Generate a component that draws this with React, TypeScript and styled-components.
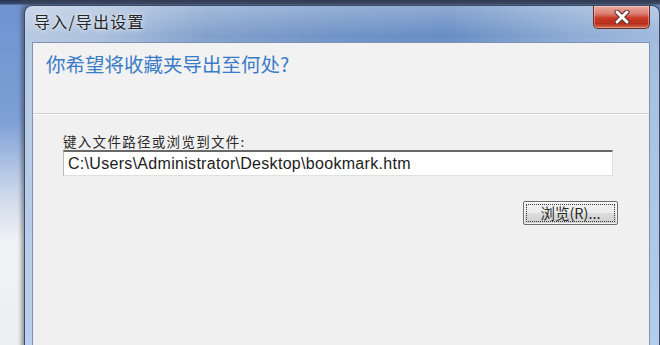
import React from 'react';
import styled, { createGlobalStyle } from 'styled-components';

const GlobalStyle = createGlobalStyle`
  html, body {
    margin: 0;
    padding: 0;
    width: 660px;
    height: 345px;
    overflow: hidden;
  }
  body {
    font-family: "Noto Sans CJK SC", "Liberation Sans", sans-serif;
  }
`;

const cjk = `"Noto Sans CJK SC", "Liberation Sans", sans-serif`;

const Desktop = styled.div`
  width: 660px;
  height: 345px;
  overflow: hidden;
  box-sizing: border-box;
  padding: 5px 0 0 24px;
  background:
    linear-gradient(to right, rgba(255, 255, 255, 0) 0, rgba(255, 255, 255, 0) 18px, rgba(90, 90, 90, 0.22) 24px),
    linear-gradient(
      to bottom,
      #263150 0,
      #3a4a6e 4px,
      #7093d0 5px,
      #7d9fd6 120px,
      #c8d5ea 190px,
      #f0f2f5 240px,
      #eceef0 345px
    );
`;

const Window = styled.div`
  width: 636px;
  height: 360px;
  box-sizing: border-box;
  border: 1px solid #3b4a68;
  border-bottom: none;
  border-radius: 8px 8px 0 0;
  padding: 0 9px 0 7px;
  display: flex;
  flex-direction: column;
  background:
    linear-gradient(to bottom, rgba(255, 255, 255, 0.3) 0, rgba(255, 255, 255, 0.05) 30px, rgba(255, 255, 255, 0.1) 40px, rgba(190, 215, 245, 0.7) 100%),
    linear-gradient(
      100deg,
      #b4c7e0 0,
      #a6bddb 80px,
      #7c9cca 180px,
      #6a8fc4 300px,
      #5f87c0 420px,
      #86a6d1 540px,
      #9db8dc 636px
    );
  box-shadow: -2px 0 4px rgba(0, 0, 0, 0.3);
`;

const TitleBar = styled.div`
  height: 36px;
  display: flex;
  justify-content: space-between;
  align-items: flex-start;
  flex: none;
`;

const Title = styled.div`
  margin: 5px 0 0 2px;
  font-family: ${cjk};
  font-size: 16px;
  line-height: 20px;
  letter-spacing: 1.2px;
  color: #262626;
  text-shadow: 0 0 6px rgba(255, 255, 255, 0.8), 0 0 2px rgba(255, 255, 255, 0.6);
`;

const CloseButton = styled.div`
  width: 57px;
  height: 23px;
  box-sizing: border-box;
  border: 1px solid #6e2a22;
  border-top: none;
  border-radius: 0 0 5px 5px;
  display: flex;
  align-items: center;
  justify-content: center;
  background: linear-gradient(
    to bottom,
    #e9a89c 0,
    #db7f72 35%,
    #c63a26 55%,
    #b8301c 80%,
    #d3694c 100%
  );
  box-shadow: inset 0 0 0 1px rgba(255, 255, 255, 0.35);
`;

const Client = styled.div`
  flex: 1;
  display: flex;
  flex-direction: column;
  background: #f0f0f0;
  border: 1px solid #7f92b3;
  border-bottom: none;
`;

const Header = styled.div`
  height: 71px;
  flex: none;
  box-sizing: border-box;
  padding: 8px 0 0 13px;
  background: #f2f2f2;
  border-bottom: 1px solid #d2d2d2;
  box-shadow: 0 1px 0 #ffffff;
`;

const Instruction = styled.div`
  font-family: ${cjk};
  font-size: 19.5px;
  line-height: 26px;
  color: #3a7cc8;
`;

const Body = styled.div`
  padding: 19px 0 0 30px;
  display: flex;
  flex-direction: column;
  width: 555px;
`;

const Label = styled.div`
  font-family: ${cjk};
  font-size: 13.5px;
  line-height: 16px;
  letter-spacing: 1.3px;
  color: #2a2a2a;
`;

const PathInput = styled.input`
  margin-top: 1px;
  width: 550px;
  height: 26px;
  box-sizing: border-box;
  border: 1px solid #e0e0e0;
  border-top: 2px solid #686868;
  border-left-color: #b8b8b8;
  padding: 0 4px;
  background: #ffffff;
  font-family: "Liberation Sans", Arial, sans-serif;
  font-size: 16px;
  letter-spacing: 0.3px;
  color: #1c1c1c;
  outline: none;
`;

const ButtonRow = styled.div`
  margin-top: 25px;
  display: flex;
  justify-content: flex-end;
`;

const Button = styled.button`
  width: 95px;
  height: 24px;
  box-sizing: border-box;
  padding: 2px;
  border: 1px solid #6f6f6f;
  border-radius: 2px;
  background: linear-gradient(to bottom, #f4f4f4 0, #ebebeb 48%, #dcdcdc 52%, #cfcfcf 100%);
  box-shadow: inset 0 0 0 1px rgba(255, 255, 255, 0.7);
  display: flex;
  cursor: default;
`;

const FocusRect = styled.span`
  flex: 1;
  display: flex;
  align-items: center;
  justify-content: center;
  border: 1px dotted #3a3a3a;
  font-family: ${cjk};
  font-size: 14.5px;
  line-height: 16px;
  color: #2a2a2a;
`;

const CloseGlyph: React.FC = () => (
  <svg width="18" height="14" viewBox="0 0 18 14">
    <path d="M4 2 L14 12 M14 2 L4 12" stroke="#5a2a26" strokeWidth="5" strokeLinecap="round" />
    <path d="M4 2 L14 12 M14 2 L4 12" stroke="#ffffff" strokeWidth="3" strokeLinecap="round" />
  </svg>
);

export default function App() {
  return (
    <>
      <GlobalStyle />
      <Desktop>
        <Window>
          <TitleBar>
            <Title>导入/导出设置</Title>
            <CloseButton>
              <CloseGlyph />
            </CloseButton>
          </TitleBar>
          <Client>
            <Header>
              <Instruction>你希望将收藏夹导出至何处?</Instruction>
            </Header>
            <Body>
              <Label>键入文件路径或浏览到文件:</Label>
              <PathInput readOnly value="C:\Users\Administrator\Desktop\bookmark.htm" />
              <ButtonRow>
                <Button>
                  <FocusRect>浏览(R)...</FocusRect>
                </Button>
              </ButtonRow>
            </Body>
          </Client>
        </Window>
      </Desktop>
    </>
  );
}
